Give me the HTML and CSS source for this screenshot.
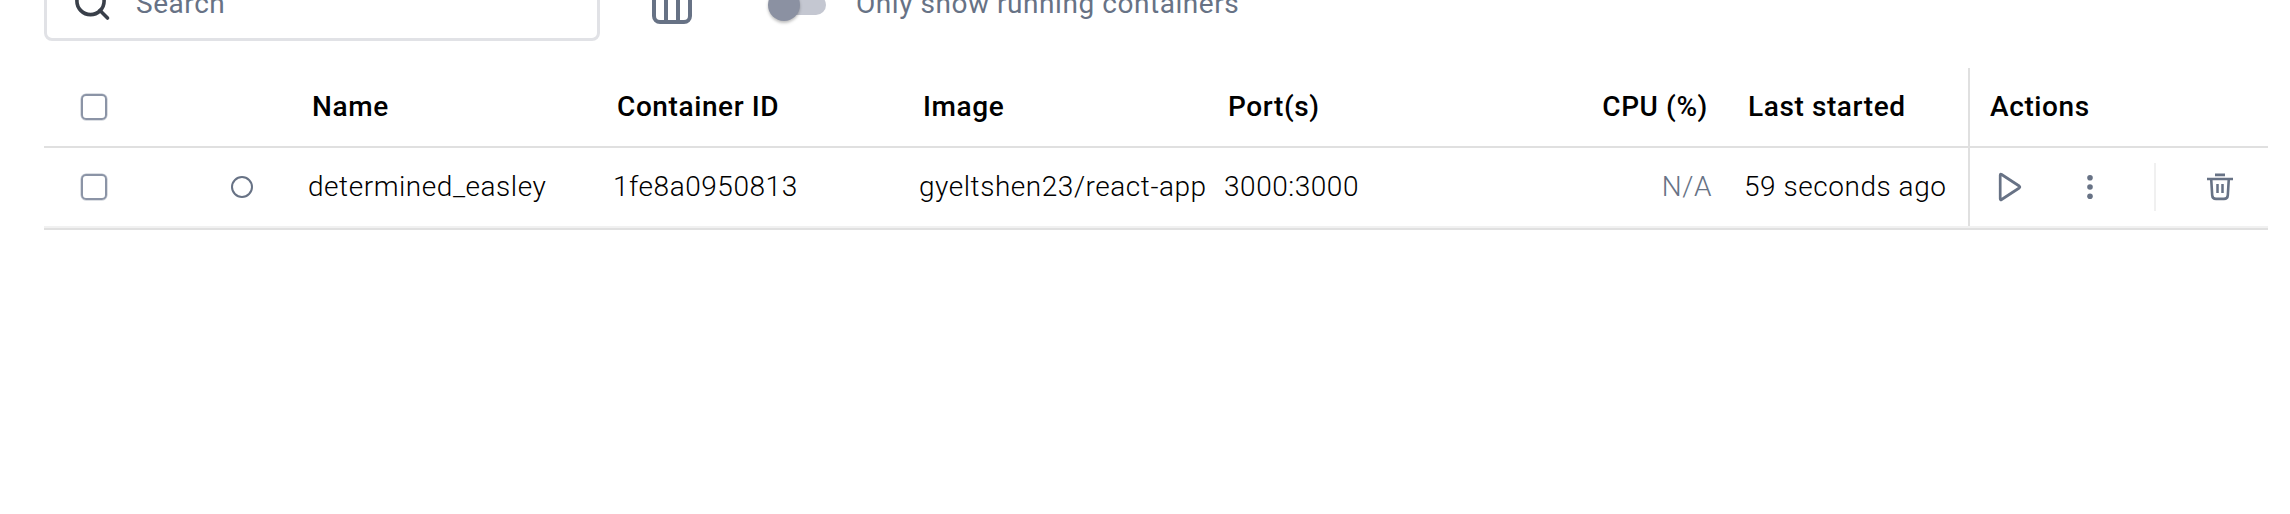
FILE: index.html
```html
<!DOCTYPE html>
<html lang="en">
<head>
<meta charset="utf-8">
<title>Containers</title>
<link rel="stylesheet" href="styles.css">
</head>
<body>
<main class="page">
  <div class="toolbar">
    <label class="search">
      <svg class="search-icon" width="48" height="48" viewBox="0 0 48 48" fill="none" stroke="#393f49" stroke-width="3.6"><circle cx="21.5" cy="22" r="13.6"/><path d="M31 31.5 38.5 39" stroke-linecap="round"/></svg>
      <span class="search-text">Search</span>
    </label>
    <svg class="columns-icon" width="40" height="40" viewBox="0 0 40 40" fill="none" stroke="#677285" stroke-width="4"><rect x="2" y="2" width="36" height="36" rx="6"/><path d="M14 2v36M26 2v36"/></svg>
    <div class="switch"><span class="thumb"></span></div>
    <span class="switch-label">Only show running containers</span>
  </div>
  <div class="table">
    <div class="row head">
      <div class="cell check"><span class="checkbox"></span></div>
      <div class="cell"></div>
      <div class="cell text">Name</div>
      <div class="cell text">Container ID</div>
      <div class="cell text">Image</div>
      <div class="cell text">Port(s)</div>
      <div class="cell text cpu">CPU (%)</div>
      <div class="cell text started">Last started</div>
      <div class="cell text actions-title">Actions</div>
    </div>
    <div class="row body">
      <div class="cell check"><span class="checkbox"></span></div>
      <div class="cell status"><span class="status-dot"></span></div>
      <div class="cell text">determined_easley</div>
      <div class="cell text">1fe8a0950813</div>
      <div class="cell text">gyeltshen23/react-app</div>
      <div class="cell text">3000:3000</div>
      <div class="cell text cpu">N/A</div>
      <div class="cell text started">59 seconds ago</div>
      <div class="cell actions">
        <svg class="play" width="24" height="30" viewBox="0 0 24 30" fill="none" stroke="#677285" stroke-width="2.7" stroke-linejoin="round"><path d="M2.2 3.2v23.6q0 1.6 1.4.7L21.2 16q1.3-1 0-2L3.6 2.5Q2.2 1.6 2.2 3.2z"/></svg>
        <svg class="more" width="6" height="26" viewBox="0 0 6 26" fill="#677285"><circle cx="3" cy="3.7" r="2.8"/><circle cx="3" cy="13" r="2.8"/><circle cx="3" cy="22.3" r="2.8"/></svg>
        <span class="divider"></span>
        <svg class="trash" width="26" height="28" viewBox="0 0 26 28" fill="none" stroke="#677285" stroke-width="2.6"><path d="M8 1.9h10M0 6h26M4.2 6l1 16.3q.3 3.6 3.8 3.6h8q3.5 0 3.8-3.6L21.800 6"/><path d="M10.500 11v9M15.500 11v9" stroke-width="2.5"/></svg>
      </div>
    </div>
  </div>
</main>
</body>
</html>
```
FILE: styles.css
```css
body {
  margin: 0;
  background: #fff;
  font-family: Roboto, sans-serif;
  font-size: 28px;
  color: #000;
}

.page {
  height: 514px;
  overflow: hidden;
  display: flex;
  flex-direction: column;
  padding: 0 22px 0 44px;
  box-sizing: border-box;
}

.toolbar {
  display: flex;
  align-items: center;
  height: 76px;
  margin-top: -35px;
  flex: none;
  color: #677285;
  letter-spacing: 0.55px;
}

.search {
  box-sizing: border-box;
  width: 556px;
  height: 76px;
  border: 3px solid #e1e2e6;
  border-radius: 8px;
  display: flex;
  align-items: center;
  padding-left: 22px;
}

.search-text {
  margin-left: 19px;
}

.columns-icon {
  margin: 2px 0 0 52px;
}

.switch {
  width: 54px;
  height: 20px;
  border-radius: 10px;
  background: #c4c7d1;
  margin: 3px 0 0 80px;
  display: flex;
  align-items: center;
}

.thumb {
  flex: none;
  width: 32px;
  height: 32px;
  margin-left: -4px;
  border-radius: 50%;
  background: #8b91a2;
  box-shadow: 0 2px 3px rgba(0, 0, 0, 0.25);
}

.switch-label {
  margin-left: 30px;
}

.table {
  margin-top: 27px;
}

.row {
  display: grid;
  grid-template-columns: 100px 164px 305px 306px 305px 305px 182px 257px 1fr;
}

.head {
  --inset: 4px;
  height: 78px;
  border-bottom: 2px solid #e0e0e0;
  font-weight: 500;
  letter-spacing: 0.6px;
}

.body {
  height: 78px;
  padding-bottom: 2px;
  border-bottom: 2px solid #e0e0e0;
  box-shadow: inset 0 -2px #f1f1f1;
  font-weight: 300;
  letter-spacing: 0.54px;
}

.cell {
  display: flex;
  align-items: center;
  padding-left: var(--inset, 0);
  white-space: nowrap;
}

.text {
  padding-bottom: 2px;
}

.check {
  padding-left: 37px;
}

.checkbox {
  box-sizing: border-box;
  width: 26px;
  height: 26px;
  border: 2px solid #8b94a6;
  border-radius: 5px;
  box-shadow: 0 0 0 0.5px #b9bfca;
}

.status {
  padding-left: 87px;
}

.status-dot {
  box-sizing: border-box;
  width: 22px;
  height: 22px;
  border: 2px solid #677285;
  border-radius: 50%;
}

.cpu {
  justify-content: flex-end;
}

.head .cpu {
  padding-right: 3px;
}

.body .cpu {
  color: #677285;
  margin-right: -1px;
}

.started {
  padding-left: 33px;
}

.head .started {
  padding-left: 37px;
}

.actions-title,
.actions {
  border-left: 2px solid #e0e0e0;
}

.actions-title {
  padding-left: 20px;
}

.actions {
  padding-left: 28px;
}

.more {
  margin-left: 65px;
}

.divider {
  width: 2px;
  height: 48px;
  margin-left: 61px;
  background: #f0f0f0;
}

.trash {
  margin-left: 51px;
}
```
